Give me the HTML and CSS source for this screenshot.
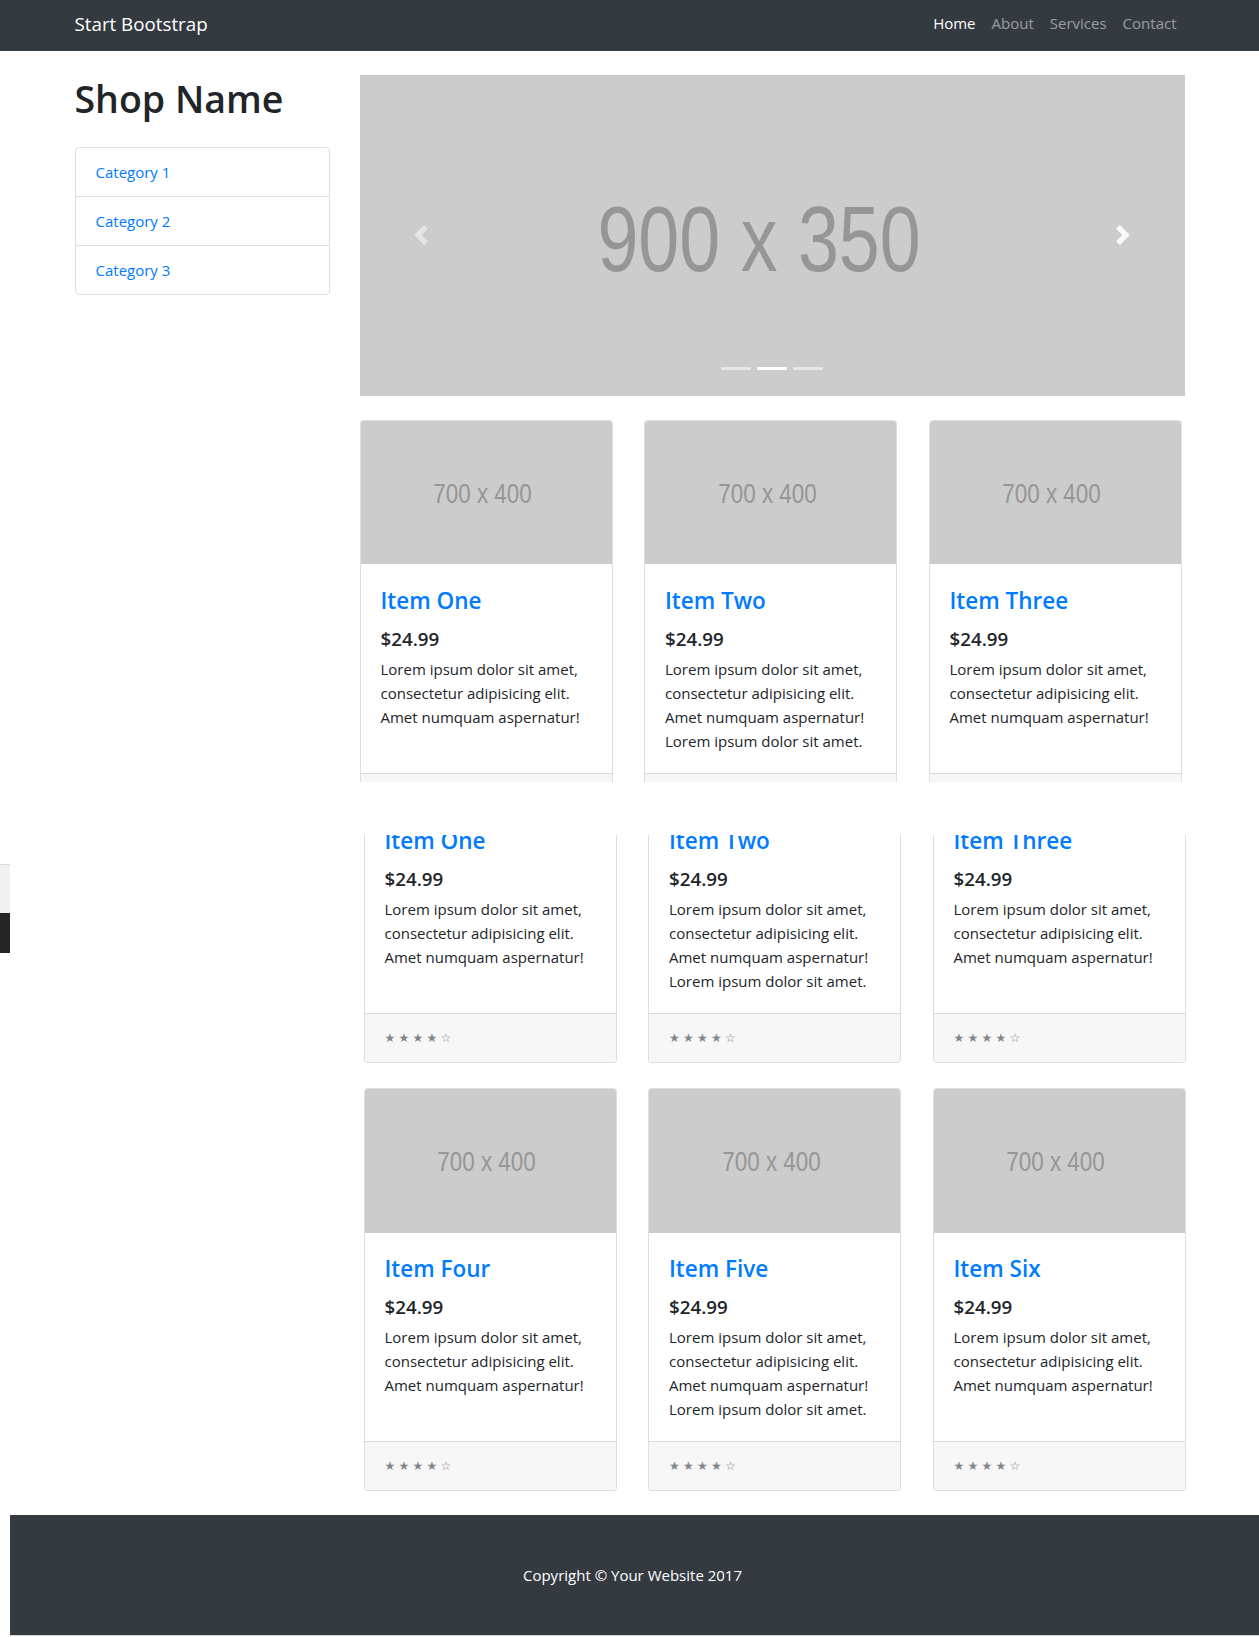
FILE: index.html
```html
<!DOCTYPE html>
<html lang="en">
<head>
<meta charset="utf-8">
<title>Shop Homepage - Start Bootstrap Template</title>
<link rel="stylesheet" href="styles.css">
</head>
<body>
<nav class="navbar">
  <div class="container nav-inner">
    <a class="brand" href="#">Start Bootstrap</a>
    <ul class="nav-links">
      <li><a class="nav-link active" href="#">Home</a></li>
      <li><a class="nav-link" href="#">About</a></li>
      <li><a class="nav-link" href="#">Services</a></li>
      <li><a class="nav-link" href="#">Contact</a></li>
    </ul>
  </div>
</nav>

<div class="frag frag-top">
  <div class="container layout">
    <aside class="sidebar">
      <h1 class="shop-name">Shop Name</h1>
      <div class="list-group">
        <a class="list-group-item" href="#">Category 1</a>
        <a class="list-group-item" href="#">Category 2</a>
        <a class="list-group-item" href="#">Category 3</a>
      </div>
    </aside>
    <main class="main">
      <div class="carousel">
        <div class="slide slide-big"><span class="ph-text ph-big">900 x 350</span></div>
        <a class="carousel-control prev" href="#">
          <svg width="20" height="20" viewBox="0 0 8 8" fill="#fff"><path d="M5.25 0l-4 4 4 4 1.5-1.5-2.5-2.5 2.5-2.5-1.5-1.5z"/></svg>
        </a>
        <a class="carousel-control next" href="#">
          <svg width="20" height="20" viewBox="0 0 8 8" fill="#fff"><path d="M2.75 0l-1.5 1.5 2.5 2.5-2.5 2.5 1.5 1.5 4-4-4-4z"/></svg>
        </a>
        <ol class="carousel-indicators"><li></li><li class="active"></li><li></li></ol>
      </div>
      <div class="cards">
        <div class="card">
          <div class="card-img"><span class="ph-text ph-small">700 x 400</span></div>
          <div class="card-body">
            <h4 class="card-title"><a href="#">Item One</a></h4>
            <h5 class="price">$24.99</h5>
            <p class="card-text">Lorem ipsum dolor sit amet, consectetur adipisicing elit. Amet numquam aspernatur!</p>
          </div>
          <div class="card-footer"><small class="stars">&#9733; &#9733; &#9733; &#9733; &#9734;</small></div>
        </div>
        <div class="card">
          <div class="card-img"><span class="ph-text ph-small">700 x 400</span></div>
          <div class="card-body">
            <h4 class="card-title"><a href="#">Item Two</a></h4>
            <h5 class="price">$24.99</h5>
            <p class="card-text">Lorem ipsum dolor sit amet, consectetur adipisicing elit. Amet numquam aspernatur! Lorem ipsum dolor sit amet.</p>
          </div>
          <div class="card-footer"><small class="stars">&#9733; &#9733; &#9733; &#9733; &#9734;</small></div>
        </div>
        <div class="card">
          <div class="card-img"><span class="ph-text ph-small">700 x 400</span></div>
          <div class="card-body">
            <h4 class="card-title"><a href="#">Item Three</a></h4>
            <h5 class="price">$24.99</h5>
            <p class="card-text">Lorem ipsum dolor sit amet, consectetur adipisicing elit. Amet numquam aspernatur!</p>
          </div>
          <div class="card-footer"><small class="stars">&#9733; &#9733; &#9733; &#9733; &#9734;</small></div>
        </div>
      </div>
    </main>
  </div>
</div>

<div class="gap-band"></div>

<div class="frag frag-bottom">
  <div class="container layout">
    <div class="sidebar"></div>
    <div class="main">
      <div class="clip">
        <div class="cards cards-scrolled">
          <div class="card">
            <div class="card-img"><span class="ph-text ph-small">700 x 400</span></div>
            <div class="card-body">
              <h4 class="card-title"><a href="#">Item One</a></h4>
              <h5 class="price">$24.99</h5>
              <p class="card-text">Lorem ipsum dolor sit amet, consectetur adipisicing elit. Amet numquam aspernatur!</p>
            </div>
            <div class="card-footer"><small class="stars">&#9733; &#9733; &#9733; &#9733; &#9734;</small></div>
          </div>
          <div class="card">
            <div class="card-img"><span class="ph-text ph-small">700 x 400</span></div>
            <div class="card-body">
              <h4 class="card-title"><a href="#">Item Two</a></h4>
              <h5 class="price">$24.99</h5>
              <p class="card-text">Lorem ipsum dolor sit amet, consectetur adipisicing elit. Amet numquam aspernatur! Lorem ipsum dolor sit amet.</p>
            </div>
            <div class="card-footer"><small class="stars">&#9733; &#9733; &#9733; &#9733; &#9734;</small></div>
          </div>
          <div class="card">
            <div class="card-img"><span class="ph-text ph-small">700 x 400</span></div>
            <div class="card-body">
              <h4 class="card-title"><a href="#">Item Three</a></h4>
              <h5 class="price">$24.99</h5>
              <p class="card-text">Lorem ipsum dolor sit amet, consectetur adipisicing elit. Amet numquam aspernatur!</p>
            </div>
            <div class="card-footer"><small class="stars">&#9733; &#9733; &#9733; &#9733; &#9734;</small></div>
          </div>
        </div>
      </div>
      <div class="cards cards-next">
        <div class="card">
          <div class="card-img"><span class="ph-text ph-small">700 x 400</span></div>
          <div class="card-body">
            <h4 class="card-title"><a href="#">Item Four</a></h4>
            <h5 class="price">$24.99</h5>
            <p class="card-text">Lorem ipsum dolor sit amet, consectetur adipisicing elit. Amet numquam aspernatur!</p>
          </div>
          <div class="card-footer"><small class="stars">&#9733; &#9733; &#9733; &#9733; &#9734;</small></div>
        </div>
        <div class="card">
          <div class="card-img"><span class="ph-text ph-small">700 x 400</span></div>
          <div class="card-body">
            <h4 class="card-title"><a href="#">Item Five</a></h4>
            <h5 class="price">$24.99</h5>
            <p class="card-text">Lorem ipsum dolor sit amet, consectetur adipisicing elit. Amet numquam aspernatur! Lorem ipsum dolor sit amet.</p>
          </div>
          <div class="card-footer"><small class="stars">&#9733; &#9733; &#9733; &#9733; &#9734;</small></div>
        </div>
        <div class="card">
          <div class="card-img"><span class="ph-text ph-small">700 x 400</span></div>
          <div class="card-body">
            <h4 class="card-title"><a href="#">Item Six</a></h4>
            <h5 class="price">$24.99</h5>
            <p class="card-text">Lorem ipsum dolor sit amet, consectetur adipisicing elit. Amet numquam aspernatur!</p>
          </div>
          <div class="card-footer"><small class="stars">&#9733; &#9733; &#9733; &#9733; &#9734;</small></div>
        </div>
      </div>
    </div>
  </div>
  <footer class="footer"><p>Copyright &copy; Your Website 2017</p></footer>
  <div class="edge-artifact"><span class="ea-light"></span><span class="ea-dark"></span></div>
</div>
</body>
</html>
```

FILE: styles.css
```css
html, body {
  overflow-x: hidden;
}
body {
  margin: 0;
  font-family: "Open Sans", "Noto Sans", sans-serif;
  font-size: 15px;
  line-height: 24px;
  color: #212529;
  background: #fff;
}
a {
  text-decoration: none;
}
.container {
  box-sizing: border-box;
  width: 1140px;
  padding: 0 15px;
  margin: 0 auto;
}

/* navbar */
.navbar {
  background: #343a40;
  height: 51px;
}
.nav-inner {
  display: flex;
  align-items: center;
  justify-content: space-between;
  height: 100%;
}
.brand {
  color: #fff;
  font-size: 18.75px;
  line-height: 30px;
  margin-top: -3px;
}
.nav-links {
  display: flex;
  list-style: none;
  margin: 0;
  padding: 0;
}
.nav-link {
  display: block;
  padding: 0 8px;
  color: rgba(255, 255, 255, 0.5);
  font-size: 15px;
  line-height: 24px;
  margin-top: -5px;
}
.nav-link.active {
  color: #fff;
}

/* fragments */
.frag-top {
  height: 731px;
  overflow: hidden;
}
.gap-band {
  height: 53px;
}
.frag-bottom {
  position: relative;
  margin-left: 4px;
  margin-right: -4px;
}
.layout {
  display: flex;
  gap: 30px;
}
.sidebar {
  width: 255px;
  flex: none;
}
.main {
  width: 825px;
  flex: none;
}

/* sidebar */
.shop-name {
  margin: 24px 0;
  font-size: 37.5px;
  line-height: 48px;
  font-weight: 600;
}
.list-group {
  border: 1px solid rgba(0, 0, 0, 0.125);
  border-radius: 4px;
}
.list-group-item {
  display: block;
  padding: 12px 20px;
  color: #007bff;
}
.list-group-item + .list-group-item {
  border-top: 1px solid rgba(0, 0, 0, 0.125);
}

/* carousel */
.carousel {
  position: relative;
  margin: 24px 0;
  aspect-ratio: 900 / 350;
  background: #ccc;
}
.slide {
  display: flex;
  align-items: center;
  justify-content: center;
  height: 100%;
}
.slide-big {
  box-sizing: border-box;
  padding: 7px 25px 0 0;
}
.ph-text {
  display: inline-block;
  font-family: "Liberation Sans", Arial, sans-serif;
  color: #969696;
  line-height: 1;
  transform: scaleX(0.8);
}
.ph-big {
  font-size: 92px;
}
.ph-small {
  font-size: 28px;
}
.carousel-control {
  position: absolute;
  top: 0;
  bottom: 0;
  width: 15%;
  display: flex;
  align-items: center;
  justify-content: center;
  opacity: 0.5;
}
.carousel-control.prev {
  left: 0;
}
.carousel-control.next {
  right: 0;
  opacity: 0.9;
}
.carousel-indicators {
  position: absolute;
  left: 0;
  right: 0;
  bottom: 10px;
  display: flex;
  justify-content: center;
  list-style: none;
  padding: 0;
  margin: 0 15% 16px;
}
.carousel-indicators li {
  width: 30px;
  height: 3px;
  margin: 0 3px;
  background: rgba(255, 255, 255, 0.5);
}
.carousel-indicators li.active {
  background: #fff;
}

/* cards */
.cards {
  display: grid;
  grid-template-columns: repeat(3, 253px);
  column-gap: 31.5px;
}
.clip {
  overflow: hidden;
}
.cards-scrolled {
  margin-top: -175px;
}
.cards-next {
  margin-top: 25px;
}
.card {
  display: flex;
  flex-direction: column;
  border: 1px solid rgba(0, 0, 0, 0.125);
  border-radius: 4px;
  overflow: hidden;
  background: #fff;
}
.card-img {
  box-sizing: border-box;
  aspect-ratio: 700 / 400;
  background: #ccc;
  display: flex;
  align-items: center;
  justify-content: center;
  padding: 3px 7px 0 0;
}
.card-body {
  flex: 1;
  padding: 20px;
}
.card-title {
  margin: 0 0 9.5px;
  padding-top: 2.5px;
  font-size: 22.5px;
  line-height: 28.8px;
  font-weight: 600;
}
.card-title a {
  color: #007bff;
}
.price {
  margin: 0 0 6.5px;
  padding-top: 1.5px;
  font-size: 18.75px;
  line-height: 24px;
  font-weight: 600;
}
.card-text {
  margin: 0;
}
.card-footer {
  padding: 12px 20px;
  background: #f7f7f7;
  border-top: 1px solid rgba(0, 0, 0, 0.125);
}
.stars {
  display: block;
  font-family: "DejaVu Sans", sans-serif;
  font-size: 12px;
  letter-spacing: -0.3px;
  line-height: 24px;
  color: #80868c;
}

/* footer */
.footer {
  margin-top: 24px;
  margin-left: 6px;
  padding: 48px 8px 48px 0;
  background: #343a40;
  border-bottom: 1px solid #d9d9d9;
}
.footer p {
  margin: 0;
  text-align: center;
  color: #fff;
}

/* left edge remnant */
.edge-artifact {
  position: absolute;
  left: -4px;
  top: 29px;
  width: 10px;
  display: flex;
  flex-direction: column;
}
.ea-light {
  height: 48px;
  background: #f0f0f0;
  border-top: 1px solid #dcdcdc;
}
.ea-dark {
  height: 40px;
  background: #262626;
}
```
